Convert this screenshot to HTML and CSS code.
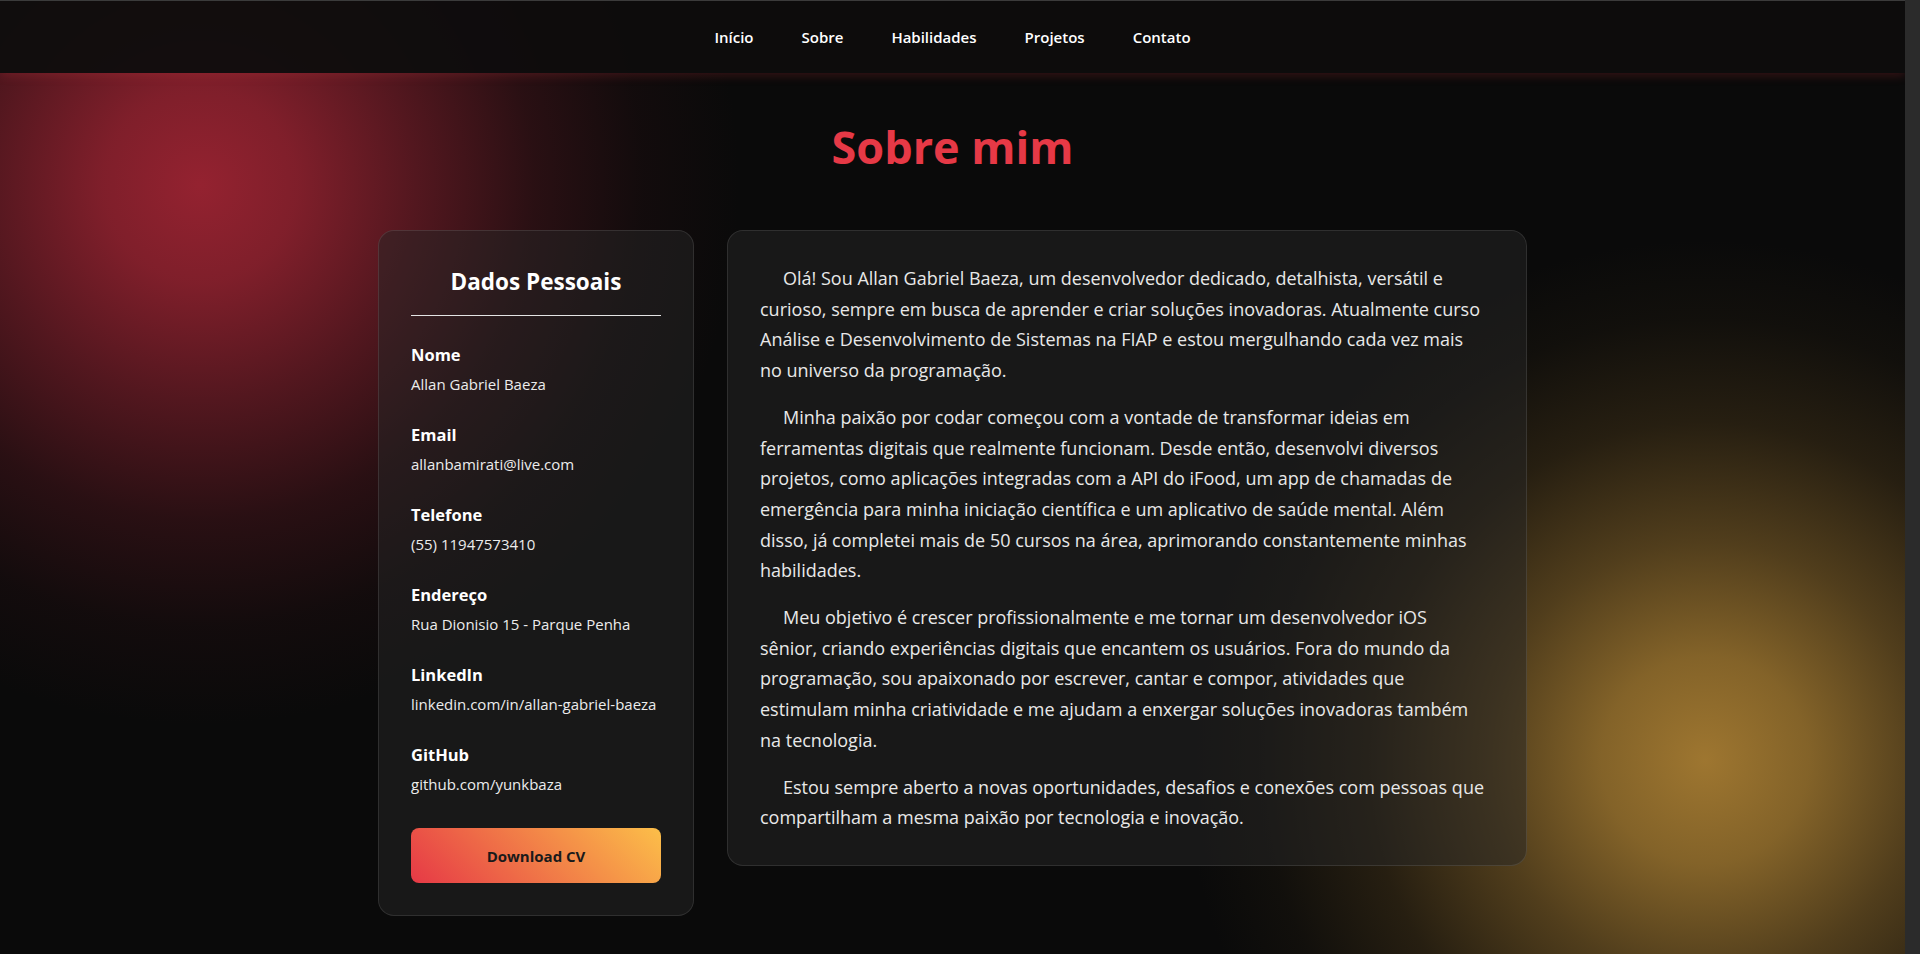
FILE: index.html
```html
<!DOCTYPE html>
<html lang="pt-BR">
<head>
<meta charset="utf-8">
<title>Allan Gabriel Baeza — Sobre mim</title>
<link rel="stylesheet" href="styles.css">
</head>
<body>
<header class="site-header">
  <nav class="nav">
    <a class="nav-link" href="#inicio">Início</a>
    <a class="nav-link" href="#sobre">Sobre</a>
    <a class="nav-link" href="#habilidades">Habilidades</a>
    <a class="nav-link" href="#projetos">Projetos</a>
    <a class="nav-link" href="#contato">Contato</a>
  </nav>
</header>
<main>
  <section class="about" id="sobre">
    <h2 class="about-title">Sobre mim</h2>
    <div class="about-grid">
      <aside class="card info-card">
        <h3 class="info-title">Dados Pessoais</h3>
        <ul class="info-list">
          <li class="info-item"><span class="info-label">Nome</span><span class="info-value">Allan Gabriel Baeza</span></li>
          <li class="info-item"><span class="info-label">Email</span><span class="info-value">allanbamirati@live.com</span></li>
          <li class="info-item"><span class="info-label">Telefone</span><span class="info-value">(55) 11947573410</span></li>
          <li class="info-item"><span class="info-label">Endereço</span><span class="info-value">Rua Dionisio 15 - Parque Penha</span></li>
          <li class="info-item"><span class="info-label">LinkedIn</span><span class="info-value">linkedin.com/in/allan-gabriel-baeza</span></li>
          <li class="info-item"><span class="info-label">GitHub</span><span class="info-value">github.com/yunkbaza</span></li>
        </ul>
        <a class="btn-cv" href="#">Download CV</a>
      </aside>
      <article class="card bio-card">
        <p>Olá! Sou Allan Gabriel Baeza, um desenvolvedor dedicado, detalhista, versátil e curioso, sempre em busca de aprender e criar soluções inovadoras. Atualmente curso Análise e Desenvolvimento de Sistemas na FIAP e estou mergulhando cada vez mais no universo da programação.</p>
        <p>Minha paixão por codar começou com a vontade de transformar ideias em ferramentas digitais que realmente funcionam. Desde então, desenvolvi diversos projetos, como aplicações integradas com a API do iFood, um app de chamadas de emergência para minha iniciação científica e um aplicativo de saúde mental. Além disso, já completei mais de 50 cursos na área, aprimorando constantemente minhas habilidades.</p>
        <p>Meu objetivo é crescer profissionalmente e me tornar um desenvolvedor iOS sênior, criando experiências digitais que encantem os usuários. Fora do mundo da programação, sou apaixonado por escrever, cantar e compor, atividades que estimulam minha criatividade e me ajudam a enxergar soluções inovadoras também na tecnologia.</p>
        <p>Estou sempre aberto a novas oportunidades, desafios e conexões com pessoas que compartilham a mesma paixão por tecnologia e inovação.</p>
      </article>
    </div>
  </section>
</main>
</body>
</html>
```

FILE: styles.css
```css
html {
  overflow-y: scroll;
  color-scheme: dark;
  background: #2b2b2b;
}

body {
  margin: 0 15px 0 0;
  min-height: 100vh;
  font-family: "Open Sans", "Noto Sans", sans-serif;
  color: #ffffff;
  background:
    radial-gradient(circle 540px at 200px 185px,
      rgba(148, 34, 48, 1) 0%,
      rgba(140, 33, 46, 0.9) 18%,
      rgba(122, 30, 42, 0.65) 40%,
      rgba(100, 26, 36, 0.35) 62%,
      rgba(80, 22, 30, 0.12) 82%,
      rgba(60, 18, 24, 0) 100%),
    radial-gradient(circle 520px at 1705px 760px,
      rgba(158, 118, 48, 1) 0%,
      rgba(148, 111, 45, 0.88) 20%,
      rgba(128, 96, 40, 0.6) 42%,
      rgba(104, 78, 33, 0.3) 65%,
      rgba(84, 64, 28, 0.1) 85%,
      rgba(70, 54, 24, 0) 100%),
    #0a0a0a;
}

.site-header {
  position: relative;
  z-index: 5;
  height: 72px;
  border-top: 1px solid #3b3b3b;
  background: rgba(14, 13, 13, 0.95);
  box-shadow: 0 2px 10px rgba(230, 57, 70, 0.22);
  display: flex;
  align-items: center;
  justify-content: center;
}

.nav {
  display: flex;
  gap: 48px;
}

.nav-link {
  color: #ffffff;
  text-decoration: none;
  font-size: 15px;
  line-height: 20px;
  font-weight: 600;
}

.about {
  padding: 45px 0 20px;
}

.about-title {
  margin: 0 0 55px;
  text-align: center;
  font-size: 45px;
  line-height: 57px;
  font-weight: 700;
  color: #e63946;
}

.about-grid {
  display: grid;
  grid-template-columns: 316px 800px;
  gap: 33px;
  justify-content: center;
  align-items: start;
}

.card {
  background: rgba(38, 38, 38, 0.5);
  border: 1px solid rgba(255, 255, 255, 0.1);
  border-radius: 16px;
  padding: 32px;
}

.info-title {
  margin: 0 0 27px;
  padding-bottom: 14px;
  border-bottom: 1px solid #e4e4e4;
  text-align: center;
  font-size: 22.5px;
  line-height: 38px;
  font-weight: 700;
}

.info-list {
  list-style: none;
  margin: 0;
  padding: 0;
  display: flex;
  flex-direction: column;
  gap: 27px;
}

.info-item {
  display: flex;
  flex-direction: column;
}

.info-label {
  font-size: 16.5px;
  line-height: 24px;
  font-weight: 700;
}

.info-value {
  margin-top: 5px;
  font-size: 15px;
  line-height: 24px;
  color: #ececec;
  white-space: nowrap;
}

.btn-cv {
  margin-top: 32px;
  height: 55px;
  display: flex;
  align-items: center;
  justify-content: center;
  border-radius: 8px;
  background: linear-gradient(45deg, #e63946, #fcbf49);
  color: #1a1a1a;
  text-decoration: none;
  font-size: 15px;
  font-weight: 700;
}

.bio-card {
  padding-right: 40px;
}

.bio-card p {
  margin: 0 0 16px;
  text-indent: 23px;
  font-size: 18px;
  line-height: 30.7px;
  color: #e8e8e8;
}

.bio-card p:last-child {
  margin-bottom: 0;
}
```
